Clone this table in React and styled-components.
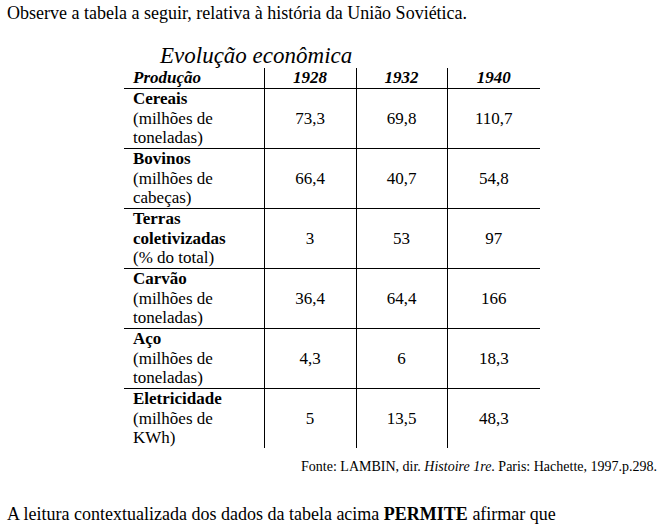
import React from 'react';
import styled, { createGlobalStyle, css } from 'styled-components';

const serif = css`
  font-family: "Liberation Serif", "Times New Roman", serif;
  color: #000000;
`;

const GlobalStyle = createGlobalStyle`
  html, body {
    margin: 0;
    padding: 0;
    background: #ffffff;
  }
  body {
    font-family: "Liberation Serif", "Times New Roman", serif;
  }
`;

const Page = styled.div`
  ${serif}
  width: 660px;
  padding: 4px 0 0 7px;
  box-sizing: border-box;
`;

const Paragraph = styled.p`
  ${serif}
  margin: 0;
  font-size: 18px;
  line-height: 19px;
`;

const Figure = styled.div`
  margin: 21px 0 0 117px;
  width: 416px;
`;

const Title = styled.div`
  ${serif}
  font-style: italic;
  font-size: 23px;
  line-height: 24px;
  padding-left: 36px;
`;

const Table = styled.table`
  ${serif}
  border-collapse: collapse;
  width: 416px;
  table-layout: fixed;
`;

const HeadCell = styled.th`
  ${serif}
  font-size: 17px;
  font-style: italic;
  font-weight: bold;
  line-height: 20px;
  height: 20px;
  padding: 0 0 0 ${(p) => (p.$left ? '9px' : '0')};
  text-align: ${(p) => (p.$left ? 'left' : 'center')};
  border-left: ${(p) => (p.$left ? 'none' : '1px solid #000')};
  vertical-align: bottom;
`;

const LabelCell = styled.td`
  ${serif}
  font-size: 17px;
  line-height: 19.67px;
  height: 59px;
  padding: 0 0 0 9px;
  border-top: 1px solid #000;
  vertical-align: middle;
`;

const ValueCell = styled.td`
  ${serif}
  font-size: 17px;
  line-height: 19.67px;
  text-align: center;
  padding: 0;
  border-top: 1px solid #000;
  border-left: 1px solid #000;
  vertical-align: middle;
`;

const Strong = styled.b`
  display: block;
  font-weight: bold;
`;

const Source = styled.div`
  ${serif}
  font-size: 14px;
  line-height: 16px;
  text-align: right;
  padding-right: 3px;
  margin-top: 11px;
`;

const Question = styled(Paragraph)`
  margin-top: 30px;
`;

const rows = [
  { name: 'Cereais', unit: ['(milhões de', 'toneladas)'], values: ['73,3', '69,8', '110,7'] },
  { name: 'Bovinos', unit: ['(milhões de', 'cabeças)'], values: ['66,4', '40,7', '54,8'] },
  { name: ['Terras', 'coletivizadas'], unit: ['(% do total)'], values: ['3', '53', '97'] },
  { name: 'Carvão', unit: ['(milhões de', 'toneladas)'], values: ['36,4', '64,4', '166'] },
  { name: 'Aço', unit: ['(milhões de', 'toneladas)'], values: ['4,3', '6', '18,3'] },
  { name: 'Eletricidade', unit: ['(milhões de', 'KWh)'], values: ['5', '13,5', '48,3'] },
];

const App = () => {
  return (
    <Page>
      <GlobalStyle />
      <Paragraph>Observe a tabela a seguir, relativa à história da União Soviética.</Paragraph>
      <Figure>
        <Title>Evolução econômica</Title>
        <Table>
          <colgroup>
            <col style={{ width: '140px' }} />
            <col style={{ width: '92px' }} />
            <col style={{ width: '91px' }} />
            <col style={{ width: '93px' }} />
          </colgroup>
          <thead>
            <tr>
              <HeadCell $left>Produção</HeadCell>
              <HeadCell>1928</HeadCell>
              <HeadCell>1932</HeadCell>
              <HeadCell>1940</HeadCell>
            </tr>
          </thead>
          <tbody>
            {rows.map((row) => (
              <tr key={row.values.join('-')}>
                <LabelCell>
                  {[].concat(row.name).map((n) => (
                    <Strong key={n}>{n}</Strong>
                  ))}
                  {row.unit.map((u) => (
                    <div key={u}>{u}</div>
                  ))}
                </LabelCell>
                {row.values.map((v, i) => (
                  <ValueCell key={i}>{v}</ValueCell>
                ))}
              </tr>
            ))}
          </tbody>
        </Table>
      </Figure>
      <Source>
        Fonte: LAMBIN, dir. <i>Histoire 1re</i>. Paris: Hachette, 1997.p.298.
      </Source>
      <Question>
        A leitura contextualizada dos dados da tabela acima <b>PERMITE</b> afirmar que
      </Question>
    </Page>
  );
};

export default App;
